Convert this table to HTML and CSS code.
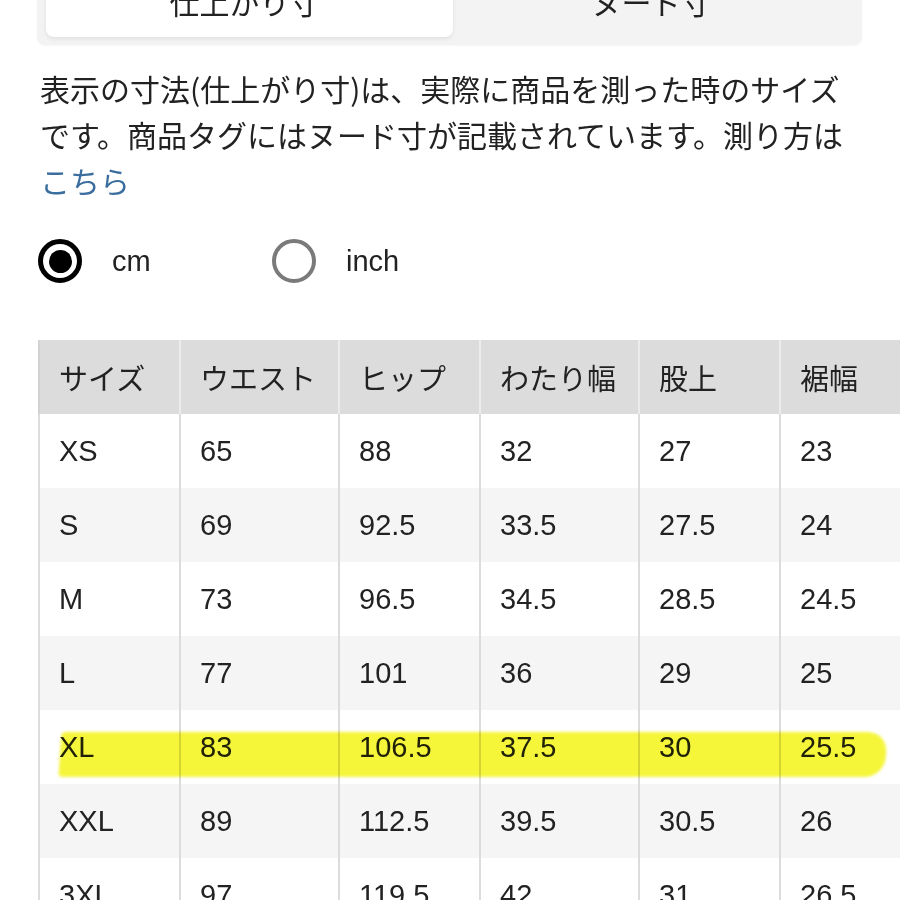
FILE: index.html
```html
<!DOCTYPE html>
<html lang="ja">
<head>
<meta charset="utf-8">
<link rel="stylesheet" href="styles.css">
</head>
<body>
<div class="page">
  <div class="seg">
    <div class="tab active">仕上がり寸</div>
    <div class="tab">ヌード寸</div>
  </div>
  <p class="desc">表示の寸法(仕上がり寸)は、実際に商品を測った時のサイズ<br>です。商品タグにはヌード寸が記載されています。測り方は<br><a class="link" href="#">こちら</a></p>
  <div class="units">
    <label class="unit"><span class="radio on"></span><span class="unit-label">cm</span></label>
    <label class="unit"><span class="radio"></span><span class="unit-label">inch</span></label>
  </div>
  <div class="table-wrap">
    <table class="sizes">
      <colgroup>
        <col class="c-a"><col class="c-b"><col class="c-a"><col class="c-b"><col class="c-a"><col class="c-a">
      </colgroup>
      <thead>
        <tr><th>サイズ</th><th>ウエスト</th><th>ヒップ</th><th>わたり幅</th><th>股上</th><th>裾幅</th></tr>
      </thead>
      <tbody>
        <tr><td>XS</td><td>65</td><td>88</td><td>32</td><td>27</td><td>23</td></tr>
        <tr><td>S</td><td>69</td><td>92.5</td><td>33.5</td><td>27.5</td><td>24</td></tr>
        <tr><td>M</td><td>73</td><td>96.5</td><td>34.5</td><td>28.5</td><td>24.5</td></tr>
        <tr><td>L</td><td>77</td><td>101</td><td>36</td><td>29</td><td>25</td></tr>
        <tr><td>XL</td><td>83</td><td>106.5</td><td>37.5</td><td>30</td><td>25.5</td></tr>
        <tr><td>XXL</td><td>89</td><td>112.5</td><td>39.5</td><td>30.5</td><td>26</td></tr>
        <tr><td>3XL</td><td>97</td><td>119.5</td><td>42</td><td>31</td><td>26.5</td></tr>
      </tbody>
    </table>
    <div class="highlight"></div>
  </div>
</div>
</body>
</html>
```
FILE: styles.css
```css
html, body {
  margin: 0;
  padding: 0;
  background: #fff;
  overflow: hidden;
}
body {
  width: 900px;
  height: 900px;
  font-family: "Liberation Sans", "Noto Sans CJK JP", sans-serif;
  color: #1e1e1e;
}
.page {
  width: 900px;
}
.seg {
  display: flex;
  margin: -40px 38px 0 37px;
  height: 85px;
  box-sizing: border-box;
  padding: 0 12px 8px 9px;
  background: #f3f3f3;
  border-radius: 0 0 8px 8px;
  box-shadow: 0 1px 2px rgba(0,0,0,0.04);
}
.tab {
  flex: 1;
  display: flex;
  align-items: center;
  justify-content: center;
  padding-top: 4px;
  font-family: "Noto Sans CJK JP", sans-serif;
  font-size: 30px;
  color: #222;
}
.tab.active {
  background: #fff;
  border-radius: 8px;
  box-shadow: 0 2px 4px rgba(0,0,0,0.08);
  padding-right: 10px;
}
.desc {
  margin: 20px 0 0 40px;
  font-family: "Noto Sans CJK JP", sans-serif;
  font-size: 30px;
  line-height: 46px;
  color: #222;
  white-space: nowrap;
}
.link {
  color: #3b6e9e;
  text-decoration: none;
}
.units {
  display: flex;
  margin: 36px 0 0 38px;
  height: 44px;
  align-items: center;
}
.unit {
  display: flex;
  align-items: center;
  width: 234px;
}
.radio {
  width: 44px;
  height: 44px;
  box-sizing: border-box;
  border-radius: 50%;
  border: 4px solid #7a7a7a;
  display: flex;
  align-items: center;
  justify-content: center;
}
.radio.on {
  border: 5px solid #000;
}
.radio.on::after {
  content: "";
  width: 23px;
  height: 23px;
  border-radius: 50%;
  background: #000;
}
.unit-label {
  margin-left: 30px;
  font-size: 29px;
  color: #222;
}
.table-wrap {
  position: relative;
  margin: 57px 0 0 38px;
  width: 900px;
}
.sizes {
  table-layout: fixed;
  border-collapse: separate;
  border-spacing: 0;
  width: 882px;
}
.c-a { width: 141px; }
.c-b { width: 159px; }
.sizes th,
.sizes td {
  height: 74px;
  box-sizing: border-box;
  padding: 0 0 0 19px;
  text-align: left;
  vertical-align: middle;
  white-space: nowrap;
  font-size: 29px;
  font-weight: normal;
  color: #222;
}
.sizes th {
  background: #dcdcdc;
  border-left: 2px solid #ececec;
  font-family: "Noto Sans CJK JP", sans-serif;
  font-size: 29px;
}
.sizes th:first-child {
  border-left: 2px solid #d2d2d2;
}
.sizes td {
  border-left: 2px solid #dcdcdc;
  background: #fff;
}
.sizes tbody tr:nth-child(even) td {
  background: #f5f5f5;
}
.highlight {
  position: absolute;
  left: 22px;
  top: 392px;
  width: 826px;
  height: 45px;
  background: #f5f53a;
  border-radius: 4px 20px 20px 4px;
  mix-blend-mode: multiply;
  filter: blur(1.5px);
  transform: skewX(-4deg);
}
```
